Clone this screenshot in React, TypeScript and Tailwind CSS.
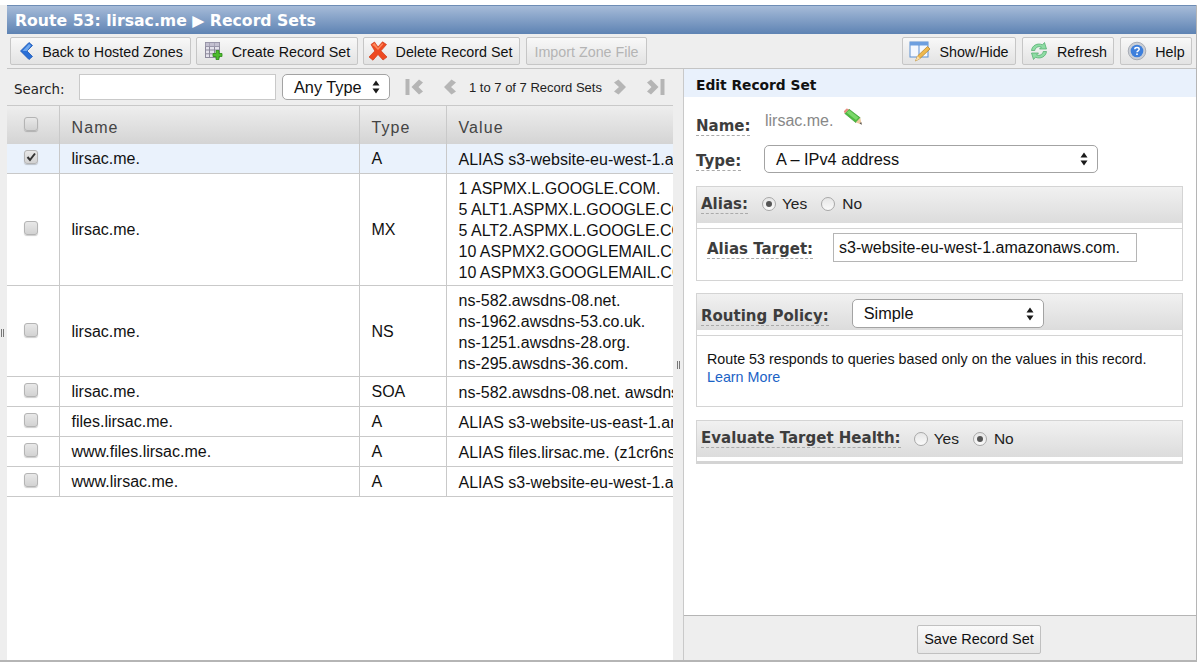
const sans = "font-['Liberation_Sans',Arial,sans-serif]";

function Grip() {
  return (
    <span className="flex gap-px">
      <span className="h-[8px] w-px bg-[#777]" />
      <span className="h-[8px] w-px bg-[#777]" />
    </span>
  );
}

function BackIcon() {
  return (
    <svg width="16" height="20" viewBox="0 0 16 20">
      <path d="M11 1.5 L14.5 4.5 L9 10 L14.5 15.5 L11 18.5 L2.5 10 Z" fill="#2a6fd6" stroke="#1c57b5" strokeWidth="0.8" />
      <path d="M11 3 L4.5 10 L9 10 L13 4.6 Z" fill="#6fa8ee" />
    </svg>
  );
}

function GridPlusIcon() {
  return (
    <svg width="20" height="20" viewBox="0 0 20 20">
      <rect x="1.5" y="1.5" width="14" height="15" fill="#e4e2ec" stroke="#8d8a9c" />
      <path d="M1.5 5.5H15.5M1.5 9H15.5M1.5 12.8H15.5M5.5 1.5V16.5M10.5 1.5V16.5" stroke="#8d8a9c" strokeWidth="1" />
      <rect x="1.5" y="1.5" width="14" height="4" fill="#b5b2c4" opacity="0.7" />
      <path d="M12 9.5h3v3h3v3h-3v3h-3v-3H9v-3h3z" fill="#4dbb2e" stroke="#2b8c18" strokeWidth="0.8" />
    </svg>
  );
}

function RedXIcon() {
  return (
    <svg width="20" height="20" viewBox="0 0 20 20">
      <path d="M3 3.5 L6.5 1 L10 6 L14.5 0.8 L18.5 3.5 L13 9.8 L19 16 L15 19 L10 13.5 L5 19.2 L1 16 L6.8 10 Z" fill="#ee4a22" stroke="#cf3a18" strokeWidth="0.7" />
      <path d="M4 4 L6.5 2 L10 7 L14.5 2 L15 3.5 L10 9 L6 5 Z" fill="#ff8a5c" />
    </svg>
  );
}

function ShowHideIcon() {
  return (
    <svg width="22" height="22" viewBox="0 0 22 22">
      <rect x="1" y="2" width="18" height="15" fill="#f4f8fe" stroke="#5c8fd0" />
      <rect x="1" y="2" width="18" height="3.5" fill="#6d9fdf" />
      <path d="M10 5V17" stroke="#5c8fd0" />
      <path d="M18.5 6.5 L21 9 L11 18.5 L6.5 21 L8.5 16 Z" fill="#efb94e" stroke="#b27f24" strokeWidth="0.7" />
      <path d="M8.5 16 L6.5 21 L11 18.5 Z" fill="#f7dfb0" />
    </svg>
  );
}

function RefreshIcon() {
  return (
    <svg width="20" height="20" viewBox="0 0 20 20">
      <path d="M2.5 9.5 C3 4.5 8.5 1.5 13.5 3.8 L15.5 1.5 L17.5 8 L10.5 8 L12.4 6 C9.5 5 6.5 6.2 5.8 9.5 Z" fill="#8fdca4" stroke="#4aa968" strokeWidth="0.7" />
      <path d="M17.5 10.5 C17 15.5 11.5 18.5 6.5 16.2 L4.5 18.5 L2.5 12 L9.5 12 L7.6 14 C10.5 15 13.5 13.8 14.2 10.5 Z" fill="#8fdca4" stroke="#4aa968" strokeWidth="0.7" />
    </svg>
  );
}

function HelpIcon() {
  return (
    <svg width="20" height="20" viewBox="0 0 20 20">
      <circle cx="10" cy="10" r="8.8" fill="#c9ced6" stroke="#9aa0aa" strokeWidth="0.8" />
      <circle cx="10" cy="10" r="6.3" fill="#3d7fdc" />
      <path d="M7.8 8.3 C7.8 6 12.2 6 12.2 8.3 C12.2 9.8 10 9.8 10 11.3" fill="none" stroke="#fff" strokeWidth="1.5" />
      <circle cx="10" cy="13.2" r="0.9" fill="#fff" />
    </svg>
  );
}

function PencilIcon() {
  return (
    <svg width="20" height="18" viewBox="0 0 20 18">
      <path d="M1.8 5.5 L6 1.2 L17.2 9.8 L12.8 14.6 Z" fill="#4dbb3f" stroke="#2f8f2a" strokeWidth="0.6" />
      <path d="M3.5 4.5 L6.2 2.2 L15.5 9.6 L13 12 Z" fill="#7ad86a" />
      <path d="M1.8 5.5 L6 1.2 L3.6 0.6 L0.8 3.2 Z" fill="#e88f84" />
      <path d="M12.8 14.6 L17.2 9.8 L18.8 16.6 Z" fill="#ecc9a0" />
      <path d="M16.6 15.6 L18.2 14 L18.9 16.8 Z" fill="#555" />
    </svg>
  );
}

function PagerIcon({ kind }: { kind: "first" | "prev" | "next" | "last" }) {
  const flip = kind === "next" || kind === "last";
  const bar = kind === "first" || kind === "last";
  return (
    <svg width={bar ? 20 : 15} height="18" viewBox={bar ? "0 0 20 18" : "0 0 15 18"} className={flip ? "-scale-x-100" : ""}>
      {bar && <rect x="0.5" y="1" width="4" height="16" fill="#b5b5b5" />}
      <path
        d={bar ? "M14 1.5 L18 4.5 L13.5 9 L18 13.5 L14 16.5 L6.5 9 Z" : "M8.5 1.5 L13 4.5 L8 9 L13 13.5 L8.5 16.5 L1 9 Z"}
        fill="#b5b5b5"
      />
    </svg>
  );
}

function UpDown() {
  return (
    <svg width="8" height="14" viewBox="0 0 8 14">
      <path d="M4 0.5 L7.5 5.5 H0.5 Z M4 13.5 L7.5 8.5 H0.5 Z" fill="#1a1a1a" />
    </svg>
  );
}

function Select({ label, className }: { label: string; className: string }) {
  return (
    <div className={`flex items-center justify-between rounded-[5px] border border-[#a3a3a3] bg-white pl-[11px] pr-[9px] text-[16.3px] text-[#111] ${className}`}>
      <span>{label}</span>
      <UpDown />
    </div>
  );
}

function ToolButton({ icon, label, className, disabled }: { icon?: React.ReactNode; label: string; className: string; disabled?: boolean }) {
  return (
    <button
      className={`flex h-[28px] items-center justify-center gap-[8px] rounded-[2px] border border-[#c6c6c6] bg-gradient-to-b from-[#f8f8f8] to-[#e3e3e3] text-[14.3px] ${disabled ? "text-[#b4b4b4]" : "text-[#111]"} ${className}`}
    >
      {icon}
      <span className="pt-[3px]">{label}</span>
    </button>
  );
}

function Checkbox({ checked }: { checked?: boolean }) {
  return (
    <span className="relative inline-block h-[14px] w-[14px] rounded-[3px] border border-[#b4b4b4] bg-gradient-to-b from-[#e8e8e8] to-[#d2d2d2] shadow-[0_1px_1px_rgba(0,0,0,0.2)]">
      {checked && (
        <svg width="14" height="14" viewBox="0 0 14 14" className="absolute -left-px -top-px">
          <path d="M3.5 7 L6 10 L11 3.5" fill="none" stroke="#333" strokeWidth="2" />
        </svg>
      )}
    </span>
  );
}

function Radio({ on }: { on?: boolean }) {
  return (
    <span className="flex h-[14px] w-[14px] items-center justify-center rounded-full border border-[#a8a8a8] bg-gradient-to-b from-[#e6e6e6] to-[#fafafa]">
      {on && <span className="h-[6px] w-[6px] rounded-full bg-[#555]" />}
    </span>
  );
}

function Label({ children }: { children: React.ReactNode }) {
  return (
    <span className="border-b border-dashed border-[#aaa] font-['DejaVu_Sans',Verdana,sans-serif] text-[15px] font-bold leading-[17px] text-[#3d3d3d]">
      {children}
    </span>
  );
}

function SectionHead({ children }: { children: React.ReactNode }) {
  return (
    <div className="flex h-[36px] items-center bg-gradient-to-b from-[#f1f1f1] to-[#dcdcdc] pl-[4px]">{children}</div>
  );
}

function RadioPair({ yes }: { yes: boolean }) {
  return (
    <div className="flex items-center text-[15.5px] text-[#222]">
      <Radio on={yes} />
      <span className="ml-[6px] mr-[14px]">Yes</span>
      <Radio on={!yes} />
      <span className="ml-[7px]">No</span>
    </div>
  );
}

const rows = [
  { name: "lirsac.me.", type: "A", value: ["ALIAS s3-website-eu-west-1.amazonaws.com."], h: "h-[29px]", checked: true },
  {
    name: "lirsac.me.",
    type: "MX",
    value: ["1 ASPMX.L.GOOGLE.COM.", "5 ALT1.ASPMX.L.GOOGLE.COM.", "5 ALT2.ASPMX.L.GOOGLE.COM.", "10 ASPMX2.GOOGLEMAIL.COM.", "10 ASPMX3.GOOGLEMAIL.COM."],
    h: "h-[112px]",
  },
  {
    name: "lirsac.me.",
    type: "NS",
    value: ["ns-582.awsdns-08.net.", "ns-1962.awsdns-53.co.uk.", "ns-1251.awsdns-28.org.", "ns-295.awsdns-36.com."],
    h: "h-[91px]",
  },
  { name: "lirsac.me.", type: "SOA", value: ["ns-582.awsdns-08.net. awsdns-hostmaster.amazon.com."], h: "h-[30px]" },
  { name: "files.lirsac.me.", type: "A", value: ["ALIAS s3-website-us-east-1.amazonaws.com."], h: "h-[30px]" },
  { name: "www.files.lirsac.me.", type: "A", value: ["ALIAS files.lirsac.me. (z1cr6nsxyz)"], h: "h-[30px]" },
  { name: "www.lirsac.me.", type: "A", value: ["ALIAS s3-website-eu-west-1.amazonaws.com."], h: "h-[30px]" },
];

export default function App() {
  return (
    <div className={`h-[671px] w-[1203px] overflow-hidden bg-white pt-[5px] ${sans}`}>
      <div className="flex h-[657px] w-[1197px] border-b-2 border-[#b5b5b5] bg-[#eeeeee]">
        <div className="flex w-[7px] shrink-0 items-center justify-start pl-[1px]">
          <Grip />
        </div>
        <div className="flex min-w-0 flex-1 flex-col border-r border-[#b5b5b5]">
          <div className="flex h-[29px] shrink-0 items-center border-t border-[#6e8db5] bg-gradient-to-b from-[#a6bbd8] to-[#5e83b3] pl-[8px] pt-[1px] font-['DejaVu_Sans',Verdana,sans-serif] text-[15.7px] font-bold text-white">
            Route 53: lirsac.me ▶ Record Sets
          </div>
          <div className="flex h-[35px] shrink-0 items-center border-b border-[#c4c4c4] pl-[3px] pr-[4px]">
            <ToolButton icon={<BackIcon />} label="Back to Hosted Zones" className="w-[181px]" />
            <ToolButton icon={<GridPlusIcon />} label="Create Record Set" className="ml-[5px] w-[162px]" />
            <ToolButton icon={<RedXIcon />} label="Delete Record Set" className="ml-[5px] w-[157px] pr-[3px]" />
            <ToolButton label="Import Zone File" className="ml-[6px] w-[121px]" disabled />
            <div className="flex-1" />
            <ToolButton icon={<ShowHideIcon />} label="Show/Hide" className="w-[114px]" />
            <ToolButton icon={<RefreshIcon />} label="Refresh" className="ml-[6px] w-[92px]" />
            <ToolButton icon={<HelpIcon />} label="Help" className="ml-[6px] w-[72px]" />
          </div>
          <div className="flex min-h-0 flex-1">
            <div className="flex w-[666px] shrink-0 flex-col">
              <div className="flex h-[37px] shrink-0 items-center border-b border-[#c9c9c9]">
                <span className="ml-[7px] w-[65px] pt-[6px] font-['DejaVu_Sans',Verdana,sans-serif] text-[13.4px] text-[#222]">Search:</span>
                <input readOnly className="h-[26px] w-[197px] border border-[#c9c9c9] bg-white" />
                <Select label="Any Type" className="ml-[6px] h-[26px] w-[108px]" />
                <div className="ml-[15px] flex items-center">
                  <PagerIcon kind="first" />
                  <span className="ml-[18px]"><PagerIcon kind="prev" /></span>
                  <span className="ml-[11px] pt-[1px] text-[13px] text-[#222]">1 to 7 of 7 Record Sets</span>
                  <span className="ml-[10px]"><PagerIcon kind="next" /></span>
                  <span className="ml-[18px]"><PagerIcon kind="last" /></span>
                </div>
              </div>
              <div className="flex-1 bg-white">
                <table className="w-full table-fixed border-collapse text-[16px] text-[#111]">
                  <colgroup>
                    <col className="w-[52px]" />
                    <col className="w-[300px]" />
                    <col className="w-[87px]" />
                    <col />
                  </colgroup>
                  <thead>
                    <tr className="h-[38px] bg-gradient-to-b from-[#eeeeee] to-[#d4d4d4] text-[16px] tracking-[1.1px] text-[#444]">
                      <th className="border-r border-[#c9c9c9] pr-[4px] pt-[1px] text-center font-normal"><Checkbox /></th>
                      <th className="border-r border-[#c9c9c9] pl-[12px] pt-[5px] text-left font-normal">Name</th>
                      <th className="border-r border-[#c9c9c9] pl-[12px] pt-[5px] text-left font-normal">Type</th>
                      <th className="pl-[12px] pt-[5px] text-left font-normal">Value</th>
                    </tr>
                  </thead>
                  <tbody>
                    {rows.map((r, i) => (
                      <tr key={i} className={`${r.h} border-b border-[#c9c9c9] ${r.checked ? "bg-[#eaf2fc]" : ""}`}>
                        <td className="border-r border-[#c9c9c9] pr-[4px] pt-[2px] text-center"><Checkbox checked={r.checked} /></td>
                        <td className="border-r border-[#c9c9c9] pl-[12px] pt-[2px]">{r.name}</td>
                        <td className="border-r border-[#c9c9c9] pl-[12px] pt-[2px]">{r.type}</td>
                        <td className="overflow-hidden whitespace-nowrap pl-[12px] pt-[2px] leading-[21px]">
                          {r.value.map((v) => (
                            <div key={v}>{v}</div>
                          ))}
                        </td>
                      </tr>
                    ))}
                  </tbody>
                </table>
              </div>
            </div>
            <div className="flex w-[10px] shrink-0 items-center justify-center">
              <Grip />
            </div>
            <div className="flex min-w-0 flex-1 flex-col border-l border-[#c9c9c9] bg-white">
              <div className="flex h-[28px] shrink-0 items-center bg-[#e9f1fc] pl-[12px] pt-[4px] font-['DejaVu_Sans',Verdana,sans-serif] text-[13.8px] font-bold text-[#111]">
                Edit Record Set
              </div>
              <div className="flex-1 px-[12px]">
                <div className="mt-[18px] flex h-[20px] items-center">
                  <span className="w-[69px] pt-[2px]"><Label>Name:</Label></span>
                  <span className="-mt-[9px] text-[16px] text-[#888]">lirsac.me.</span>
                  <span className="-mt-[17px] ml-[10px]"><PencilIcon /></span>
                </div>
                <div className="mt-[10px] flex h-[28px] items-center">
                  <span className="w-[68px] pt-[4px]"><Label>Type:</Label></span>
                  <Select label="A – IPv4 address" className="h-[28px] w-[334px]" />
                </div>
                <div className="mt-[13px] w-[487px] border border-[#d4d4d4]">
                  <SectionHead>
                    <span className="-mt-[2px]"><Label>Alias:</Label></span>
                    <span className="-mt-[3px] ml-[14px]"><RadioPair yes /></span>
                  </SectionHead>
                  <div className="mt-[5px] h-[52px] border-t border-[#d4d4d4] pl-[10px] pt-[4px]">
                    <div className="flex items-center">
                      <span className="w-[126px] pt-[2px]"><Label>Alias Target:</Label></span>
                      <input readOnly defaultValue="s3-website-eu-west-1.amazonaws.com." className="h-[29px] w-[304px] border border-[#b5b5b5] pl-[5px] text-[16px] text-[#111]" />
                    </div>
                  </div>
                </div>
                <div className="mt-[12px] w-[487px] border border-[#d4d4d4]">
                  <SectionHead>
                    <span className="pt-[7px]"><Label>Routing Policy:</Label></span>
                    <Select label="Simple" className="ml-[23px] mt-[3px] h-[29px] w-[192px]" />
                  </SectionHead>
                  <div className="mt-[5px] h-[71px] border-t border-[#d4d4d4] pl-[10px] pt-[14px] text-[14.3px] leading-[19px] text-[#111]">
                    <div>Route 53 responds to queries based only on the values in this record.</div>
                    <a className="-mt-[1px] block text-[#1b63c6]">Learn More</a>
                  </div>
                </div>
                <div className="mt-[13px] w-[487px] border border-[#d4d4d4]">
                  <SectionHead>
                    <Label>Evaluate Target Health:</Label>
                    <span className="-mt-[1px] ml-[13px]"><RadioPair yes={false} /></span>
                  </SectionHead>
                  <div className="mt-[4px] border-t-2 border-[#d4d4d4]" />
                </div>
              </div>
              <div className="flex h-[45px] shrink-0 items-start border-t border-[#b5b5b5] bg-[#eeeeee] pl-[233px] pt-[9px]">
                <button className="h-[29px] w-[124px] rounded-[2px] border border-[#c0c0c0] bg-gradient-to-b from-[#fafafa] to-[#e6e6e6] text-[14.5px] text-[#111]">
                  Save Record Set
                </button>
              </div>
            </div>
          </div>
        </div>
      </div>
    </div>
  );
}
